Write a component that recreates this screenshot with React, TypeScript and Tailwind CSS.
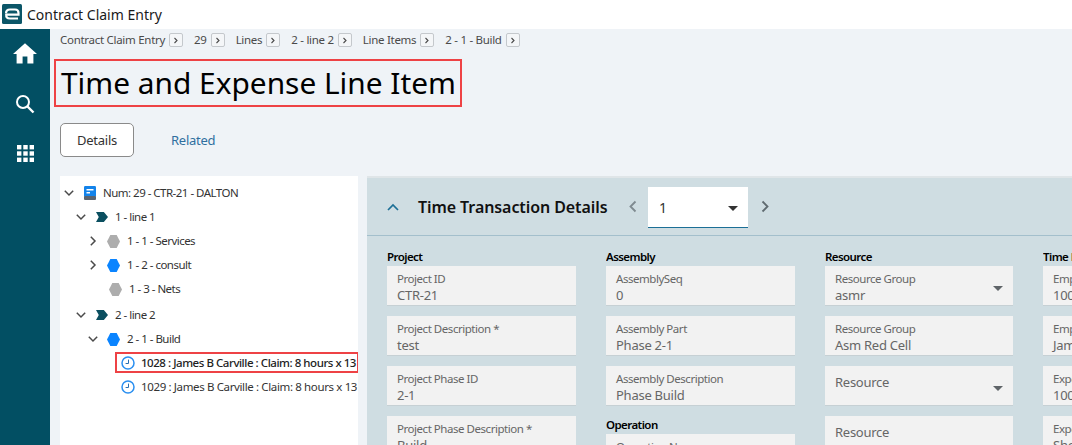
import React from "react";

function Hex({ color }: { color: string }) {
  return (
    <svg width="13" height="13" viewBox="0 0 14 13" preserveAspectRatio="none" className="shrink-0">
      <polygon points="3.6,0 10.4,0 14,6.5 10.4,13 3.6,13 0,6.5" fill={color} />
    </svg>
  );
}

function Chevron({ dir }: { dir: "down" | "right" | "none" }) {
  if (dir === "none") return <span className="w-[10px] shrink-0" />;
  return (
    <svg width="10" height="10" viewBox="0 0 10 10" className="shrink-0" fill="none" stroke="#4a4a4a" strokeWidth="1.5">
      {dir === "down" ? <path d="M0.8 2.8 L5 7 L9.2 2.8" /> : <path d="M2.8 0.8 L7 5 L2.8 9.2" />}
    </svg>
  );
}

function Tag() {
  return (
    <svg width="12" height="10" viewBox="0 0 13 10" preserveAspectRatio="none" className="shrink-0">
      <path d="M0 0 H8.5 L13 5 L8.5 10 H0 L3 5 Z" fill="#0b4f60" />
    </svg>
  );
}

function Clock() {
  return (
    <svg width="14" height="14" viewBox="0 0 14 14" className="shrink-0" fill="none">
      <circle cx="7" cy="7" r="6" stroke="#2a8ff0" strokeWidth="1.5" />
      <path d="M7.5 3.6 V7.5 H4.6" stroke="#2a6fb0" strokeWidth="1" />
    </svg>
  );
}

function Book() {
  return (
    <svg width="12" height="14" viewBox="0 0 12 14" className="shrink-0">
      <rect x="0" y="0" width="12" height="11" rx="1.2" fill="#1383ea" />
      <rect x="0" y="10" width="12" height="4" rx="1" fill="#5a6470" />
      <rect x="2.5" y="3" width="7" height="1.5" fill="#fff" />
      <rect x="2.5" y="6" width="3.5" height="1.5" fill="#fff" />
    </svg>
  );
}

function Caret() {
  return (
    <svg width="10" height="5" viewBox="0 0 10 5" className="shrink-0">
      <path d="M0 0 H10 L5 5 Z" fill="#5f6468" />
    </svg>
  );
}

function Crumb({ text, gap }: { text: string; gap: string }) {
  return (
    <div className={`flex items-start ${gap}`}>
      <span className="text-[11.5px] leading-[14px] text-[#4a4a4a] whitespace-nowrap tracking-[-0.025em]">{text}</span>
      <span className="ml-[4px] w-[14px] h-[14px] border border-[#c4c8cc] rounded-[2px] flex items-center justify-center bg-[#f4f6f8]">
        <svg width="6" height="7" viewBox="0 0 6 7" fill="none" stroke="#4a4a4a" strokeWidth="1.1"><path d="M1.5 1 L4 3.5 L1.5 6" /></svg>
      </span>
    </div>
  );
}

function Row({ pad, chev, icon, text, iconGap = "ml-[10px]", className = "" }: any) {
  return (
    <div className={`flex items-center h-6 whitespace-nowrap text-[11.5px] text-[#333] tracking-[-0.045em] ${pad} ${className}`}>
      <Chevron dir={chev} />
      <span className={`${iconGap} flex items-center`}>{icon}</span>
      <span className="ml-[7px]">{text}</span>
    </div>
  );
}

function Field({ label, value, select }: { label?: string; value: string; select?: boolean }) {
  return (
    <div className="h-[40px] mb-[10px] bg-[#f2f2f2] border-b border-[#c6d0d4] pl-[10px] pr-[10px] flex items-start justify-between overflow-hidden">
      <div className="min-w-0 whitespace-nowrap">
        {label ? (
          <>
            <div className="text-[11.5px] leading-[16px] pt-[5px] text-[#666] tracking-[-0.04em]">{label}</div>
            <div className="text-[13px] leading-[15px] mt-px text-[#666] tracking-[-0.02em]">{value}</div>
          </>
        ) : (
          <div className="text-[13px] leading-[18px] pt-[7px] text-[#666] tracking-[-0.02em]">{value}</div>
        )}
      </div>
      {select && <div className="pt-[20px]"><Caret /></div>}
    </div>
  );
}

function Heading({ children }: { children: React.ReactNode }) {
  return <div className="h-[18px] text-[11.5px] leading-[18px] font-semibold text-black tracking-[-0.05em] whitespace-nowrap overflow-hidden">{children}</div>;
}

export default function App() {
  return (
    <div className="w-[1072px] h-[445px] overflow-hidden flex flex-col bg-white font-['Noto_Sans',sans-serif]">
      <header className="h-[29px] shrink-0 flex items-center bg-white">
        <svg width="20" height="20" viewBox="0 0 20 20" className="ml-[2px] mt-[-1px]">
          <rect width="20" height="20" rx="1.5" fill="#0b5668" />
          <path d="M4 9.5 C4 6.5 5.5 5.5 8 5.5 H13 C15.5 5.5 16.5 6.5 16.5 9 V10.6 H4.6 M8 14.5 H16" fill="none" stroke="#fff" strokeWidth="2.2" />
          <path d="M4.2 10 C4 13.5 5 14.5 8 14.5" fill="none" stroke="#fff" strokeWidth="2.2" />
        </svg>
        <span className="ml-[5px] text-[14px] text-[#1a1a1a] whitespace-nowrap">Contract Claim Entry</span>
      </header>

      <div className="flex flex-1 min-h-0">
        <nav className="w-[50px] shrink-0 bg-[#024f63] flex flex-col items-center pt-[13px]">
          <svg width="24" height="24" viewBox="2 3 20 18" fill="#fff"><path d="M10 20v-6h4v6h5v-8h3L12 3 2 12h3v8z" /></svg>
          <svg width="20" height="20" viewBox="0 0 20 20" fill="none" stroke="#fff" strokeWidth="2" className="mt-[28px]">
            <circle cx="8" cy="8" r="6" />
            <path d="M12.5 12.5 L18.5 18.5" strokeWidth="2.4" />
          </svg>
          <svg width="17" height="17" viewBox="0 0 17 17" fill="#fff" className="mt-[31px]">
            <rect x="0" y="0" width="4.4" height="4.4" /><rect x="6.3" y="0" width="4.4" height="4.4" /><rect x="12.6" y="0" width="4.4" height="4.4" />
            <rect x="0" y="6.3" width="4.4" height="4.4" /><rect x="6.3" y="6.3" width="4.4" height="4.4" /><rect x="12.6" y="6.3" width="4.4" height="4.4" />
            <rect x="0" y="12.6" width="4.4" height="4.4" /><rect x="6.3" y="12.6" width="4.4" height="4.4" /><rect x="12.6" y="12.6" width="4.4" height="4.4" />
          </svg>
        </nav>

        <main className="flex-1 min-w-0 bg-[#eff3f7] flex flex-col overflow-hidden">
          <div className="h-[30px] shrink-0 pl-[10px] pt-[4px] flex items-start">
            <Crumb text="Contract Claim Entry" gap="" />
            <Crumb text="29" gap="ml-[11px]" />
            <Crumb text="Lines" gap="ml-[11px]" />
            <Crumb text="2 - line 2" gap="ml-[11px]" />
            <Crumb text="Line Items" gap="ml-[11px]" />
            <Crumb text="2 - 1 - Build" gap="ml-[11px]" />
          </div>

          <div className="w-[408px] h-[48px] shrink-0 ml-[4px] border-2 border-[#ee4245] flex items-center pl-[5px]">
            <h1 className="text-[29.85px] leading-[40px] text-black whitespace-nowrap">Time and Expense Line Item</h1>
          </div>

          <div className="flex items-center mt-[16px] ml-[10px] h-[34px] shrink-0">
            <div className="w-[74px] h-[34px] pt-[2px] border border-[#8a8a8a] rounded-[5px] bg-white flex items-center justify-center text-[13px] text-[#333] tracking-[-0.02em]">Details</div>
            <div className="ml-[37px] pt-[2px] text-[13px] text-[#2f6f9f] tracking-[-0.02em]">Related</div>
          </div>

          <div className="flex flex-1 min-h-0 mt-[19px] ml-[10px]">
            <section className="w-[298px] shrink-0 bg-white pt-[5px] overflow-hidden">
              <Row pad="pl-[4px]" chev="down" icon={<Book />} text="Num: 29 - CTR-21 - DALTON" iconGap="ml-[10px]" />
              <Row pad="pl-[16px]" chev="down" icon={<Tag />} text="1 - line 1" iconGap="ml-[10px]" />
              <Row pad="pl-[28px]" chev="right" icon={<Hex color="#adadad" />} text="1 - 1 - Services" iconGap="ml-[9px]" />
              <Row pad="pl-[28px]" chev="right" icon={<Hex color="#0a84ff" />} text="1 - 2 - consult" iconGap="ml-[9px]" />
              <Row pad="pl-[28px]" chev="none" icon={<Hex color="#adadad" />} text="1 - 3 - Nets" iconGap="ml-[11px]" />
              <Row pad="pl-[16px]" chev="down" icon={<Tag />} text="2 - line 2" iconGap="ml-[10px]" className="mt-[2px]" />
              <Row pad="pl-[28px]" chev="down" icon={<Hex color="#0a84ff" />} text="2 - 1 - Build" iconGap="ml-[9px]" />
              <div className="ml-[55px] -mr-px h-[21px] mt-[1px] mb-[2px] border-2 border-[#ee4245] flex items-center pl-[4px] whitespace-nowrap text-[11.5px] font-medium text-[#222] tracking-[-0.04em]">
                <Clock />
                <span className="ml-[6px]">1028 : James B Carville : Claim: 8 hours x 13</span>
              </div>
              <div className="ml-[55px] h-6 flex items-center pl-[6px] whitespace-nowrap text-[11.5px] text-[#333] tracking-[-0.032em]">
                <Clock />
                <span className="ml-[6px]">1029 : James B Carville : Claim: 8 hours x 13</span>
              </div>
            </section>

            <section className="ml-[9px] flex-1 min-w-0 bg-[#cfdde2] border-t-2 border-[#dfe5e8] overflow-hidden">
              <div className="h-[58px] border-b border-[#a3bfcc] flex items-center">
                <svg width="12" height="8" viewBox="0 0 12 8" fill="none" stroke="#1c6f96" strokeWidth="1.7" className="ml-[20px]"><path d="M1 7 L6 2 L11 7" /></svg>
                <span className="ml-[19px] w-[190px] text-[16px] font-semibold text-[#111] whitespace-nowrap tracking-[-0.005em]">Time Transaction Details</span>
                <svg width="9" height="13" viewBox="0 0 9 13" fill="none" stroke="#7f8a90" strokeWidth="1.8" className="ml-[20px]"><path d="M7.5 1.5 L2.5 6.5 L7.5 11.5" /></svg>
                <div className="ml-[11px] mt-[2px] w-[100px] h-[41px] bg-white border-b border-[#1c6f96] flex items-center justify-between pl-[11px] pr-[10px] text-[14px] text-[#333]">
                  <span>1</span>
                  <svg width="10" height="5" viewBox="0 0 10 5" className="mt-[2px]"><path d="M0 0 H10 L5 5 Z" fill="#333" /></svg>
                </div>
                <svg width="9" height="13" viewBox="0 0 9 13" fill="none" stroke="#5f6a70" strokeWidth="1.8" className="ml-[13px]"><path d="M1.5 1.5 L6.5 6.5 L1.5 11.5" /></svg>
              </div>

              <div className="grid grid-cols-[189px_189px_188px_189px] gap-x-[30px] pl-[20px] pt-[12px]">
                <div>
                  <Heading>Project</Heading>
                  <Field label="Project ID" value="CTR-21" />
                  <Field label="Project Description *" value="test" />
                  <Field label="Project Phase ID" value="2-1" />
                  <Field label="Project Phase Description *" value="Build" />
                </div>
                <div>
                  <Heading>Assembly</Heading>
                  <Field label="AssemblySeq" value="0" />
                  <Field label="Assembly Part" value="Phase 2-1" />
                  <Field label="Assembly Description" value="Phase Build" />
                  <Heading>Operation</Heading>
                  <Field label="Operation Num" value="10" />
                </div>
                <div>
                  <Heading>Resource</Heading>
                  <Field label="Resource Group" value="asmr" select />
                  <Field label="Resource Group" value="Asm Red Cell" />
                  <Field value="Resource" select />
                  <Field value="Resource" />
                </div>
                <div>
                  <Heading>Time Entry</Heading>
                  <Field label="Employee ID" value="1001" />
                  <Field label="Employee Name" value="James B Carville" />
                  <Field label="Expense ID" value="1001" />
                  <Field label="Expense Name" value="Sheet" />
                </div>
              </div>
            </section>
          </div>
        </main>
      </div>
    </div>
  );
}
